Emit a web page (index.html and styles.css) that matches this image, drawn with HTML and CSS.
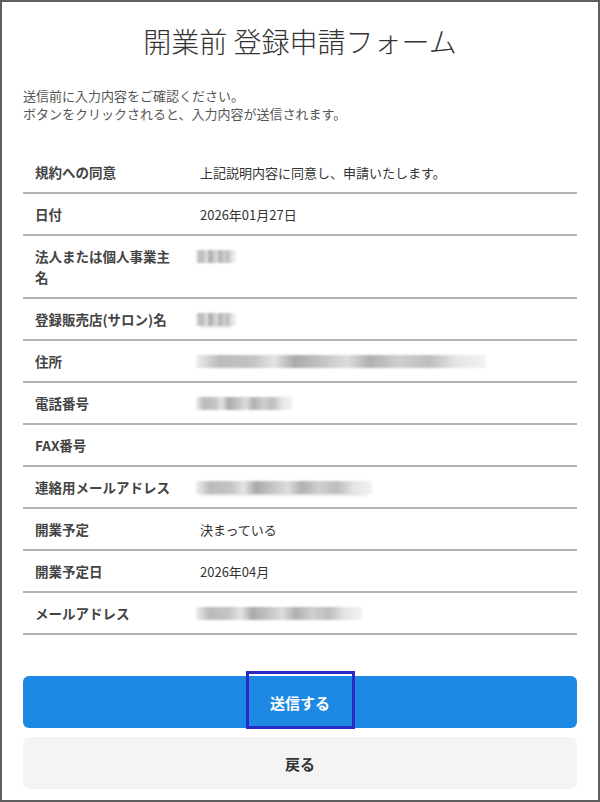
FILE: index.html
```html
<!DOCTYPE html>
<html lang="ja">
<head>
    <meta charset="UTF-8">
    <meta name="viewport" content="width=device-width, initial-scale=1.0">
    <title>開業前 登録申請フォーム - 確認</title>
    <link rel="stylesheet" href="styles.css">
</head>
<body>
    <div class="frame">
        <h1 class="page-title">開業前 登録申請フォーム</h1>

        <p class="lead">送信前に入力内容をご確認ください。<br>ボタンをクリックされると、入力内容が送信されます。</p>

        <table class="confirm-table">
            <tr>
                <th>規約への同意</th>
                <td>上記説明内容に同意し、申請いたします。</td>
            </tr>
            <tr>
                <th>日付</th>
                <td>2026年01月27日</td>
            </tr>
            <tr>
                <th>法人または個人事業主名</th>
                <td><span class="mask mask-xs"></span></td>
            </tr>
            <tr>
                <th>登録販売店(サロン)名</th>
                <td><span class="mask mask-xs mask-line"></span></td>
            </tr>
            <tr>
                <th>住所</th>
                <td><span class="mask mask-xl"></span></td>
            </tr>
            <tr>
                <th>電話番号</th>
                <td><span class="mask mask-s"></span></td>
            </tr>
            <tr>
                <th>FAX番号</th>
                <td></td>
            </tr>
            <tr>
                <th>連絡用メールアドレス</th>
                <td><span class="mask mask-l mask-line"></span></td>
            </tr>
            <tr>
                <th>開業予定</th>
                <td>決まっている</td>
            </tr>
            <tr>
                <th>開業予定日</th>
                <td>2026年04月</td>
            </tr>
            <tr>
                <th>メールアドレス</th>
                <td><span class="mask mask-m"></span></td>
            </tr>
        </table>

        <div class="actions">
            <button type="submit" class="btn btn-send">送信する<span class="focus-ring"></span></button>
            <button type="button" class="btn btn-back">戻る</button>
        </div>
    </div>
</body>
</html>
```

FILE: styles.css
```css
  body {
      margin: 0;
      padding: 0;
      font-family: "Noto Sans CJK JP", "Noto Sans", sans-serif;
      background: #fff;
      color: #333;
  }
  .frame {
      height: 802px;
      box-sizing: border-box;
      border: 2px solid #5f5f5f;
      padding: 0 21px;
  }
  .page-title {
      margin: 0;
      padding-top: 19px;
      font-size: 28px;
      line-height: 40px;
      font-weight: 300;
      text-align: center;
      color: #333;
  }
  .lead {
      margin: 26px 0 0;
      font-size: 13px;
      line-height: 17.5px;
      color: #555;
  }
  .confirm-table {
      width: 100%;
      margin-top: 30px;
      border-collapse: collapse;
      font-size: 13px;
      line-height: 21px;
  }
  .confirm-table tr {
      border-bottom: 2px solid #b4b4b4;
  }
  .confirm-table th {
      width: 141px;
      padding: 10px 24px 9px 12px;
      text-align: left;
      vertical-align: top;
      font-size: 13.5px;
      font-weight: 700;
      color: #444;
  }
  .confirm-table td {
      padding: 10px 12px 9px 0;
      vertical-align: top;
      color: #333;
  }

  /* blurred (hidden) personal data */
  .mask {
      display: inline-block;
      height: 13px;
      margin-top: 4px;
      margin-left: -4px;
      vertical-align: top;
      filter: blur(1.2px);
      background: linear-gradient(90deg,
          #eee 0%, #bbb 8%, #c4c4c4 20%, #e4e4e4 27%, #aaa 34%,
          #c8c8c8 45%, #ddd 52%, #b0b0b0 60%, #cfcfcf 70%,
          #bdbdbd 80%, #e6e6e6 90%, #f2f2f2 100%);
  }
  .mask-xs { width: 40px; }
  .mask-s { width: 96px; }
  .mask-m { width: 166px; }
  .mask-l { width: 176px; }
  .mask-xl { width: 290px; }
  .mask-line {
      box-shadow: 0 7px 0 -5px #eaeaea;
  }

  .actions {
      display: flex;
      flex-direction: column;
      gap: 9px;
      margin-top: 41px;
  }
  .btn {
      position: relative;
      height: 52px;
      border: none;
      border-radius: 6px;
      font-family: inherit;
      font-size: 15px;
      font-weight: 700;
      cursor: pointer;
  }
  .btn-send {
      background-color: #1e88e5;
      color: #fff;
  }
  .btn-back {
      background-color: #f4f4f4;
      color: #333;
  }
  .focus-ring {
      position: absolute;
      left: 223px;
      top: -5px;
      width: 109px;
      height: 58px;
      box-sizing: border-box;
      border: 3px solid #2b2bc4;
  }
```
